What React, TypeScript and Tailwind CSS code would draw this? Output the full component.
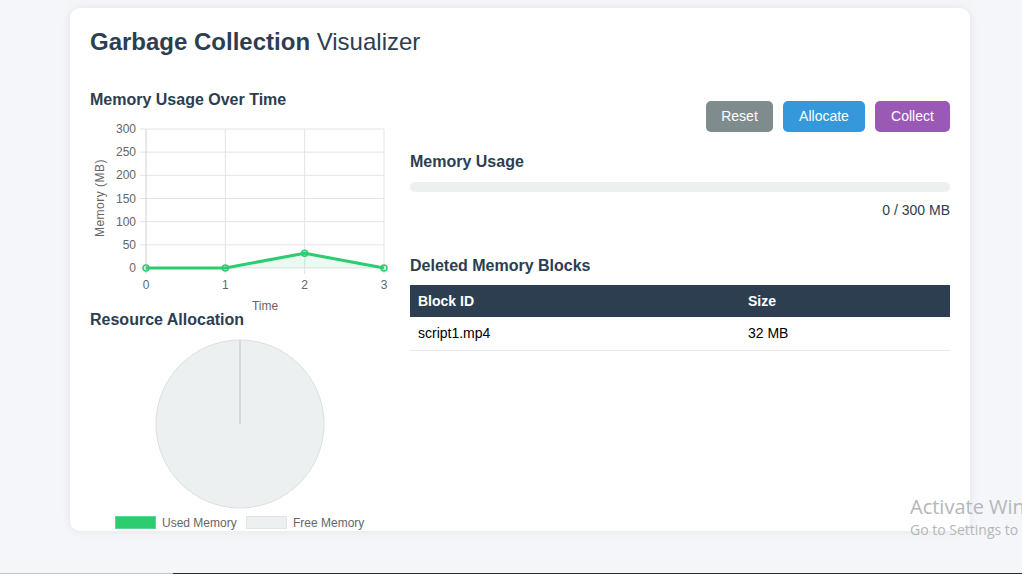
import React from "react";

const font = { fontFamily: '"Liberation Sans", Arial, sans-serif' };

function LineChart() {
  const x0 = 56, x3 = 294, yTop = 20, yBot = 159;
  const xs = [0, 1, 2, 3].map((i) => x0 + ((x3 - x0) / 3) * i);
  const data = [0, 0, 32, 0];
  const yOf = (v: number) => yBot - (v / 300) * (yBot - yTop);
  const ticks = [0, 50, 100, 150, 200, 250, 300];
  const pts = data.map((v, i) => [xs[i], yOf(v)]);
  return (
    <svg width="300" height="201" viewBox="0 0 300 201" className="block overflow-visible">
      {ticks.map((t) => (
        <g key={t}>
          <line x1={50} x2={x3} y1={yOf(t)} y2={yOf(t)} stroke="#e4e4e4" strokeWidth="1" />
          <text x={46} y={yOf(t) + 4} textAnchor="end" fontSize="12" fill="#666" style={font}>
            {t}
          </text>
        </g>
      ))}
      {xs.map((x, i) => (
        <g key={i}>
          <line x1={x} x2={x} y1={yTop} y2={yBot + 6} stroke={i === 0 ? "#d0d0d0" : "#e4e4e4"} strokeWidth="1" />
          <text x={x} y={180} textAnchor="middle" fontSize="12" fill="#666" style={font}>
            {i}
          </text>
        </g>
      ))}
      <text x={175} y={201} textAnchor="middle" fontSize="12" fill="#666" style={font}>
        Time
      </text>
      <text
        x={0}
        y={0}
        transform="translate(14 89) rotate(-90)"
        textAnchor="middle"
        fontSize="12"
        fill="#666"
        letterSpacing="0.5"
        style={font}
      >
        Memory (MB)
      </text>
      <polygon
        points={`${xs[0]},${yBot} ${pts.map((p) => p.join(",")).join(" ")} ${xs[3]},${yBot}`}
        fill="rgba(46,204,113,0.1)"
      />
      <polyline
        points={pts.map((p) => p.join(",")).join(" ")}
        fill="none"
        stroke="#2ecc71"
        strokeWidth="3"
        strokeLinejoin="round"
      />
      {pts.map((p, i) => (
        <circle key={i} cx={p[0]} cy={p[1]} r="3" fill="rgba(46,204,113,0.15)" stroke="#2ecc71" strokeWidth="1.5" />
      ))}
    </svg>
  );
}

function PieChart() {
  return (
    <svg width="300" height="202" viewBox="0 0 300 202" className="block overflow-visible">
      <circle cx={150} cy={95} r={84} fill="#ecf0f1" stroke="#d9dfdf" strokeWidth="1" />
      <line x1={150} y1={11} x2={150} y2={95} stroke="#d5dada" strokeWidth="2" />
      <rect x={25.5} y={187.5} width={40} height={12} fill="#2ecc71" stroke="#5fd693" strokeWidth="1" />
      <text x={72} y={197.5} fontSize="12" fill="#666" style={font}>
        Used Memory
      </text>
      <rect x={156.5} y={187.5} width={40} height={12} fill="#ecf0f1" stroke="#dfe4e4" strokeWidth="1" />
      <text x={203} y={197.5} fontSize="12" fill="#666" style={font}>
        Free Memory
      </text>
    </svg>
  );
}

export default function App() {
  return (
    <div className="w-[1022px] h-[574px] overflow-hidden flex flex-col bg-[#f5f6fa]" style={font}>
      <div className="relative h-[573px]">
        <div className="ml-[70px] mt-[8px] w-[900px] h-[523px] bg-white rounded-[10px] shadow-[0_0_10px_rgba(0,0,0,0.08)] px-[20px] pt-[20px]">
          <h1 className="text-[24px] leading-[28px] text-[#2c3e50] m-0">
            <span className="font-bold">Garbage Collection</span> Visualizer
          </h1>
          <div className="flex gap-[20px] mt-[24px]">
            <div className="w-[300px] shrink-0">
              <h3 className="mt-[10px] text-[16px] leading-[19px] font-bold text-[#2c3e50]">Memory Usage Over Time</h3>
              <LineChart />
              <h3 className="text-[16px] leading-[19px] font-bold text-[#2c3e50]">Resource Allocation</h3>
              <PieChart />
            </div>
            <div className="w-[540px]">
              <div className="flex justify-end gap-[10px] mt-[21px]">
                <button className="h-[31px] w-[67px] rounded-[5px] bg-[#7f8c8d] text-white text-[14px]">Reset</button>
                <button className="h-[31px] w-[82px] rounded-[5px] bg-[#3498db] text-white text-[14px]">Allocate</button>
                <button className="h-[31px] w-[75px] rounded-[5px] bg-[#9b59b6] text-white text-[14px]">Collect</button>
              </div>
              <h3 className="mt-[20px] text-[16px] leading-[19px] font-bold text-[#2c3e50]">Memory Usage</h3>
              <div className="mt-[11px] h-[10px] rounded-full bg-[#ecf0f1]"></div>
              <div className="mt-[10px] text-right text-[14px] leading-[16px] text-[#2c3e50]">0 / 300 MB</div>
              <h3 className="mt-[38px] text-[16px] leading-[19px] font-bold text-[#2c3e50]">Deleted Memory Blocks</h3>
              <table className="mt-[10px] w-full border-collapse text-[14px]">
                <thead>
                  <tr className="bg-[#2c3e50] text-white">
                    <th className="h-[32px] w-[330px] px-[8px] text-left font-bold">Block ID</th>
                    <th className="h-[32px] px-[8px] text-left font-bold">Size</th>
                  </tr>
                </thead>
                <tbody>
                  <tr className="border-b border-[#e8e8e8] text-black">
                    <td className="h-[33px] px-[8px]">script1.mp4</td>
                    <td className="h-[33px] px-[8px]">32 MB</td>
                  </tr>
                </tbody>
              </table>
            </div>
          </div>
        </div>
        <div
          className="absolute left-[910px] top-[494px] whitespace-nowrap text-[#b4b6b9] pointer-events-none"
          style={{ fontFamily: '"Open Sans", "Noto Sans", sans-serif' }}
        >
          <div className="text-[20px] leading-[25px]">Activate Windows</div>
          <div className="text-[14px] leading-[20px] mt-[1px]">Go to Settings to activate Windows.</div>
        </div>
      </div>
      <div className="flex h-[1px]">
        <div className="w-[173px] bg-[#c4c4c4]"></div>
        <div className="flex-1 bg-[#2b2b2b]"></div>
      </div>
    </div>
  );
}
